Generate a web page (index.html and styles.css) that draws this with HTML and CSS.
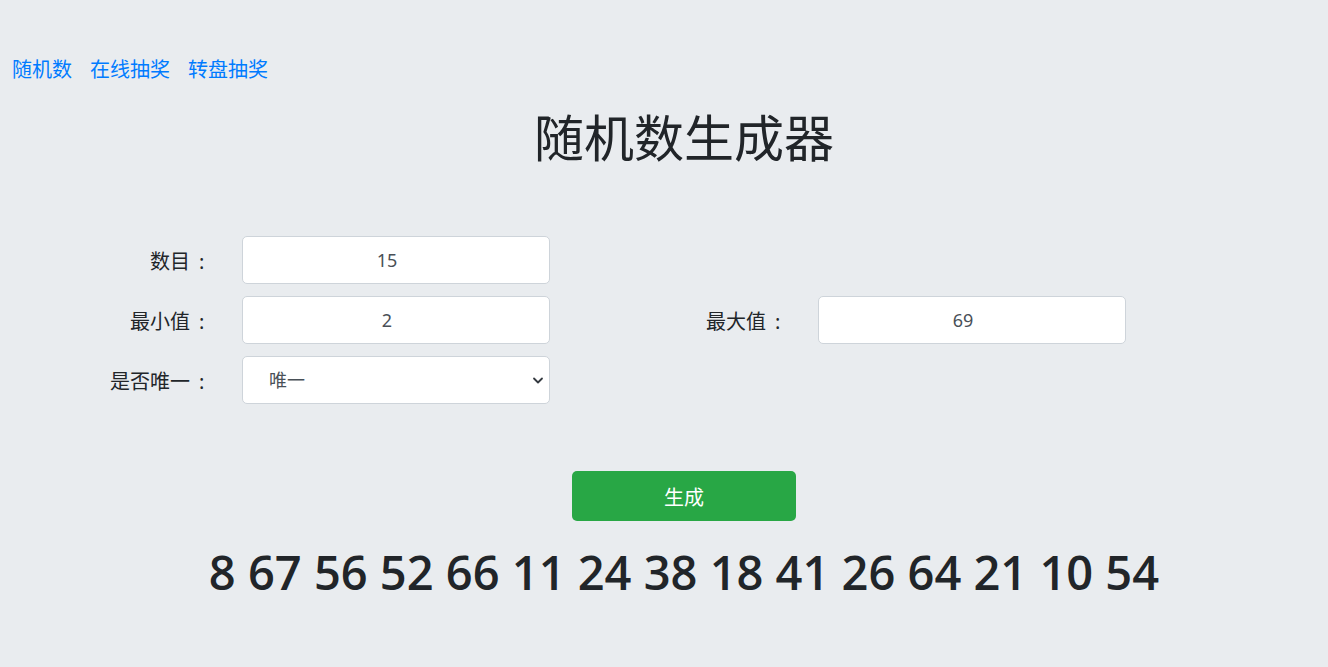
FILE: index.html
```html
<!DOCTYPE html>
<html lang="zh-CN">
<head>
    <meta charset="UTF-8">
    <title>随机数生成器</title>
    <link rel="stylesheet" href="styles.css">
</head>
<body>

<!-- Top links -->
<nav class="links">
    <a href="#">随机数</a>
    <a href="#">在线抽奖</a>
    <a href="#">转盘抽奖</a>
</nav>

<h1 class="title">随机数生成器</h1>

<!-- Settings form -->
<form class="settings">
    <label class="field-label" for="count">数目<span class="colon">:</span></label>
    <input class="field num" id="count" type="text" value="15">
    <span></span>
    <span></span>

    <label class="field-label" for="min">最小值<span class="colon">:</span></label>
    <input class="field num" id="min" type="text" value="2">
    <label class="field-label" for="max">最大值<span class="colon">:</span></label>
    <input class="field num" id="max" type="text" value="69">

    <label class="field-label" for="unique">是否唯一<span class="colon">:</span></label>
    <div class="select-wrap">
        <select class="field select" id="unique">
            <option>唯一</option>
            <option>可重复</option>
        </select>
        <svg class="caret" width="12" height="12" viewBox="0 0 12 12"><path d="M2 4.5l4 4 4-4" fill="none" stroke="#343a40" stroke-width="1.8" stroke-linecap="round" stroke-linejoin="round"/></svg>
    </div>
</form>

<div class="actions">
    <button type="button" class="btn-generate">生成</button>
</div>

<div class="result">8 67 56 52 66 11 24 38 18 41 26 64 21 10 54</div>

</body>
</html>
```

FILE: styles.css
```css
body {
    margin: 0;
    padding: 0;
    background-color: #e9ecef;
    color: #212529;
    font-family: "Noto Sans", "Noto Sans CJK SC", sans-serif;
}

/* Top links */
.links {
    padding: 58px 0 0 12px;
    display: flex;
    gap: 18px;
    font-size: 20px;
    line-height: 24px;
}

.links a {
    color: #007bff;
    text-decoration: none;
}

.title {
    margin: 20px 0 0 40px;
    text-align: center;
    font-size: 50px;
    font-weight: 400;
    line-height: 72px;
}

/* Settings form */
.settings {
    margin-top: 62px;
    display: grid;
    grid-template-columns: 242px 308px 268px 308px;
    row-gap: 12px;
    align-items: center;
}

.field-label {
    padding-right: 32px;
    text-align: right;
    font-size: 20px;
}

/* colon sits in a full-width cell, nudged right */
.colon {
    display: inline-block;
    box-sizing: border-box;
    width: 20px;
    padding-left: 9px;
    text-align: left;
}

.field {
    box-sizing: border-box;
    width: 100%;
    height: 48px;
    border: 1px solid #ced4da;
    border-radius: 5px;
    background-color: #fff;
    color: #495057;
    font-family: "Noto Sans", "Noto Sans CJK SC", sans-serif;
    font-size: 18px;
    text-align: center;
    outline: none;
}

.num {
    padding: 0 18px 0 0;
}

.select-wrap {
    position: relative;
}

.select {
    appearance: none;
    text-align: left;
    padding: 0 16px 0 26px;
}

.caret {
    position: absolute;
    right: 6px;
    top: 18px;
    pointer-events: none;
}

/* Generate button */
.actions {
    margin: 67px 0 0 40px;
    display: flex;
    justify-content: center;
}

.btn-generate {
    width: 224px;
    height: 50px;
    border: none;
    border-radius: 5px;
    background-color: #28a745;
    color: #fff;
    font-family: "Noto Sans", "Noto Sans CJK SC", sans-serif;
    font-size: 20px;
    cursor: pointer;
}

/* Result numbers */
.result {
    margin: 16px 0 0 40px;
    text-align: center;
    font-family: "Open Sans", "Noto Sans", sans-serif;
    font-size: 47px;
    font-weight: 600;
    line-height: 70px;
}
```
